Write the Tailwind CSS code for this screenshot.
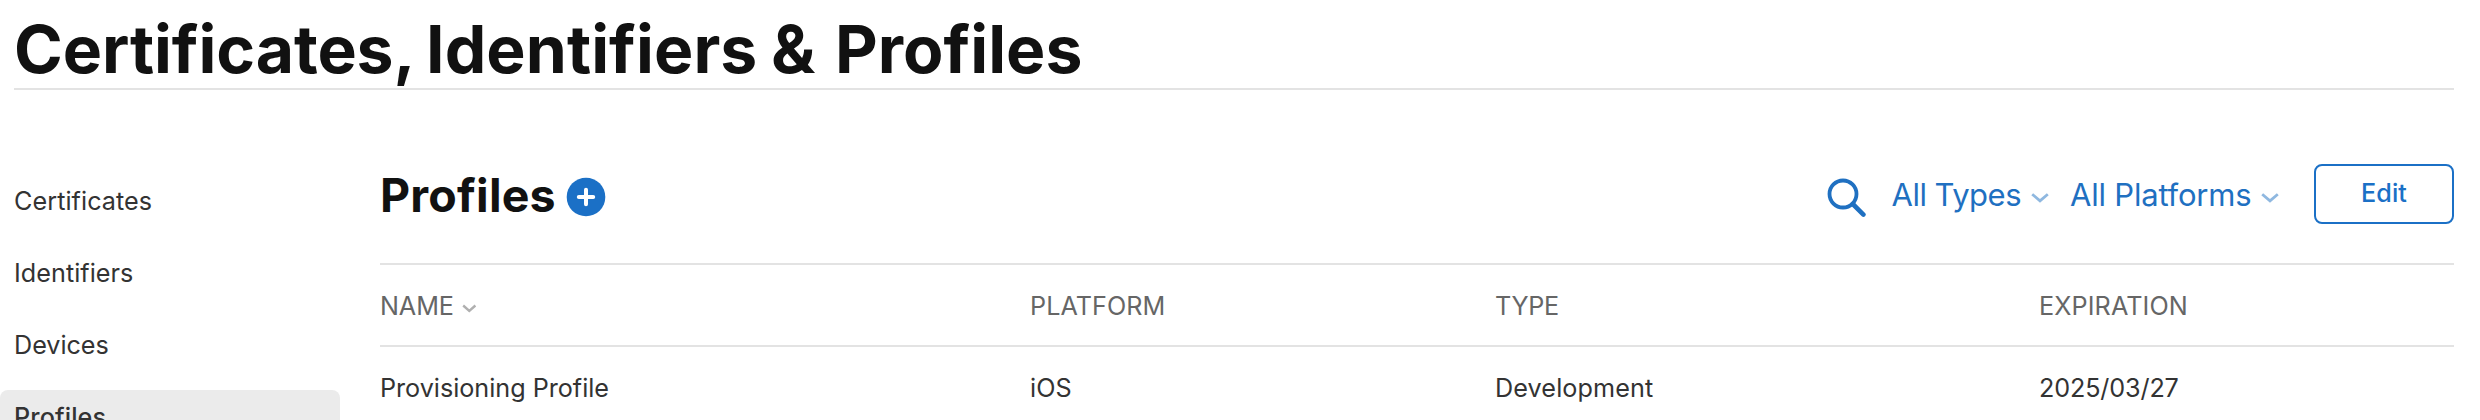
<!DOCTYPE html>
<html lang="en">
<head>
<meta charset="utf-8">
<title>Certificates, Identifiers &amp; Profiles</title>
<script src="https://cdn.jsdelivr.net/npm/@tailwindcss/browser@4"></script>
</head>
<body class="h-[420px] w-[2480px] overflow-hidden bg-white font-['Inter','Liberation_Sans',sans-serif] text-[25.2px] text-[#333]">
  <header class="mr-[26px] ml-[14px] h-[90px] border-b-2 border-[#e3e3e3] pt-2.5">
    <h1 class="text-[66px] leading-[79px] font-bold whitespace-nowrap text-[#111]"><span class="mr-[-5px] tracking-[-0.1px]">Certificates,</span> <span class="mr-[-2px] tracking-[0.08px]">Identifiers</span> <span class="mr-1">&amp;</span> <span>Profiles</span></h1>
  </header>

  <div class="flex h-[330px] overflow-hidden">
    <nav class="flex w-[340px] shrink-0 flex-col gap-4 pt-[84px]">
      <a class="h-14 shrink-0 rounded-lg pl-[14px] leading-[54px] tracking-[0.06px]">Certificates</a>
      <a class="h-14 shrink-0 rounded-lg pl-[14px] leading-[54px] tracking-[0.032px]">Identifiers</a>
      <a class="h-14 shrink-0 rounded-lg pl-[14px] leading-[54px] tracking-[-0.04px]">Devices</a>
      <a class="h-14 shrink-0 rounded-lg bg-[#ebebeb] pl-[14px] leading-[54px] font-medium tracking-[0.107px]">Profiles</a>
    </nav>

    <main class="ml-10 w-[2074px] pt-[74px]">
      <div class="flex h-[60px] justify-between">
        <div class="flex">
          <h2 class="w-[186px] text-[46.5px] leading-[62px] font-bold tracking-[0.194px] text-[#111]">Profiles</h2>
          <svg class="mt-[13px] h-10 w-10" viewBox="0 0 40 40" fill="none">
            <circle cx="20" cy="20" r="19.3" fill="#1b70c6"/>
            <path d="M20 12.8v14.4M12.8 20h14.4" stroke="#fff" stroke-width="4" stroke-linecap="round"/>
          </svg>
        </div>
        <div class="flex text-[31px] leading-[61px] whitespace-nowrap text-[#1f70c1]">
          <svg class="mt-3.5 mr-[26px] h-10 w-10" viewBox="0 0 40 40" fill="none" stroke="#1f70c1">
            <circle cx="17" cy="16" r="13.5" stroke-width="3.8"/>
            <path d="M26.8 26L37.4 36.6" stroke-width="4.6" stroke-linecap="round"/>
          </svg>
          <span class="w-[139.5px] tracking-[-0.5px]">All Types</span>
          <svg class="mt-7 mr-[21px] h-3 w-[18px]" viewBox="0 0 18 12" fill="none" stroke="#8fb8e0" stroke-width="2.8"><path d="M1.2 2.2L9 8.9L16.8 2.2"/></svg>
          <span class="w-[191px] tracking-[-0.2px]">All Platforms</span>
          <svg class="mt-7 mr-[35px] h-3 w-[18px]" viewBox="0 0 18 12" fill="none" stroke="#8fb8e0" stroke-width="2.8"><path d="M1.2 2.2L9 8.9L16.8 2.2"/></svg>
          <button class="h-[60px] w-[140px] rounded-lg border-2 border-[#1b70c6] pb-[2px] text-center text-[25.2px] leading-[54px] font-medium tracking-[0.1px] text-[#1b70c6]">Edit</button>
        </div>
      </div>

      <div class="mt-[39px] grid h-[84px] grid-cols-[650px_465px_544px_1fr] border-y-2 border-[#e3e3e3] leading-[82px] text-[#666]">
        <div class="flex">
          <span class="w-[82px] tracking-[-0.102px]">NAME</span>
          <svg class="mt-[38px] h-3 w-4" viewBox="0 0 16 12" fill="none" stroke="#b0b0b0" stroke-width="2.4"><path d="M1.2 2.5L7.3 7.8L13.4 2.5"/></svg>
        </div>
        <span class="tracking-[0.05px]">PLATFORM</span>
        <span class="tracking-[-0.311px]">TYPE</span>
        <span class="tracking-[0.1px]">EXPIRATION</span>
      </div>
      <div class="grid h-[73px] grid-cols-[650px_465px_544px_1fr] overflow-hidden leading-[82px]">
        <span class="tracking-[-0.02px]">Provisioning Profile</span>
        <span class="tracking-[0.07px]">iOS</span>
        <span class="tracking-[0.103px]">Development</span>
        <span class="tracking-[-0.14px]">2025/03/27</span>
      </div>
    </main>
  </div>
</body>
</html>
